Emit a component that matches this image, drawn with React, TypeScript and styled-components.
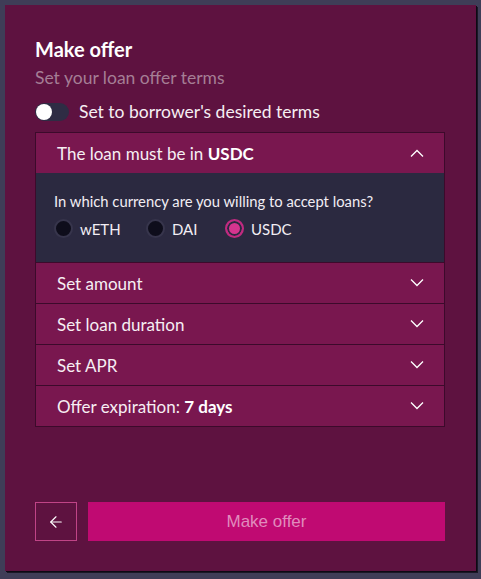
import styled, { createGlobalStyle } from 'styled-components'
import { ArrowLeft } from 'lucide-react'

const GlobalStyle = createGlobalStyle`
  body {
    margin: 0;
    background: #3f3d57;
    font-family: Lato, 'Noto Sans', sans-serif;
  }
`

const Panel = styled.div`
  box-sizing: border-box;
  margin: 5px;
  width: 471px;
  height: 566px;
  background: #5e1240;
  box-shadow: 1px 1px 0 #0c0a14, 2px 2px 0 #1a1726;
  padding: 32px 31px 30px 30px;
  display: flex;
  flex-direction: column;
  color: #f4eef2;
`

const Title = styled.h2`
  margin: 0;
  font-size: 20px;
  line-height: 24px;
  font-weight: 700;
  color: #ffffff;
`

const Subtitle = styled.p`
  margin: 7px 0 0;
  font-size: 17.5px;
  line-height: 20px;
  color: #a57e95;
`

const ToggleRow = styled.label`
  display: flex;
  align-items: center;
  gap: 10px;
  margin-top: 13px;
  font-size: 17.5px;
  line-height: 22px;
  color: #f6eef3;
`

const Switch = styled.span`
  position: relative;
  width: 34px;
  height: 18px;
  border-radius: 9px;
  background: #2e2c44;
  &::after {
    content: '';
    position: absolute;
    left: 1px;
    top: 1px;
    width: 16px;
    height: 16px;
    border-radius: 50%;
    background: #ffffff;
  }
`

const Accordion = styled.div`
  margin-top: 9px;
  border: 1px solid #3c0a2b;
  display: flex;
  flex-direction: column;
`

const Row = styled.div<{ $first?: boolean }>`
  display: flex;
  align-items: center;
  justify-content: space-between;
  height: 40px;
  padding: 0 20px 0 21px;
  background: #79174f;
  border-top: ${(p) => (p.$first ? 'none' : '1px solid #3c0a2b')};
  font-size: 17px;
  color: #f6eef3;
  b {
    font-weight: 700;
    color: #ffffff;
  }
`

const Body = styled.div`
  background: #2b2940;
  padding: 18px 18px 24px;
  display: flex;
  flex-direction: column;
  gap: 8px;
`

const Question = styled.div`
  font-size: 14.8px;
  line-height: 20px;
  color: #f2eef4;
`

const Options = styled.div`
  display: flex;
  align-items: center;
`

const Option = styled.label<{ $width: number }>`
  display: flex;
  align-items: center;
  gap: 7px;
  width: ${(p) => p.$width}px;
  font-size: 15px;
  color: #f2eef4;
`

const Radio = styled.span<{ $checked?: boolean }>`
  box-sizing: border-box;
  width: 19px;
  height: 19px;
  border-radius: 50%;
  background: ${(p) => (p.$checked ? '#d5358f' : '#0e0d1b')};
  border: 2px solid ${(p) => (p.$checked ? '#c02a80' : '#37354c')};
  box-shadow: ${(p) => (p.$checked ? 'inset 0 0 0 2px #2b2940' : 'none')};
`

const Footer = styled.div`
  margin-top: auto;
  display: flex;
  gap: 11px;
`

const BackButton = styled.button`
  box-sizing: border-box;
  width: 42px;
  height: 39px;
  background: transparent;
  border: 1px solid #c04487;
  color: #ffffff;
  display: flex;
  align-items: center;
  justify-content: center;
  padding: 0;
`

const SubmitButton = styled.button`
  flex: 1;
  height: 39px;
  border: none;
  background: #c00a72;
  color: #e08cbd;
  font-family: 'Liberation Sans', Arial, sans-serif;
  font-size: 17px;
`

const Chevron = ({ up }: { up?: boolean }) => (
  <svg width="14" height="8" viewBox="0 0 14 8" fill="none">
    <path
      d={up ? 'M1 7.5 L7 1.5 L13 7.5' : 'M1 0.5 L7 6.5 L13 0.5'}
      stroke="#ffffff"
      strokeWidth="1.3"
    />
  </svg>
)

const rows = [
  { label: 'Set amount' },
  { label: 'Set loan duration' },
  { label: 'Set APR' },
  { label: 'Offer expiration: ', value: '7 days' },
]

const currencies = [
  { name: 'wETH', width: 92 },
  { name: 'DAI', width: 79 },
  { name: 'USDC', width: 80, checked: true },
]

export default function App() {
  return (
    <>
      <GlobalStyle />
      <Panel>
        <Title>Make offer</Title>
        <Subtitle>Set your loan offer terms</Subtitle>
        <ToggleRow>
          <Switch />
          Set to borrower's desired terms
        </ToggleRow>
        <Accordion>
          <Row $first>
            <span>
              The loan must be in <b>USDC</b>
            </span>
            <Chevron up />
          </Row>
          <Body>
            <Question>In which currency are you willing to accept loans?</Question>
            <Options>
              {currencies.map((c) => (
                <Option key={c.name} $width={c.width}>
                  <Radio $checked={c.checked} />
                  {c.name}
                </Option>
              ))}
            </Options>
          </Body>
          {rows.map((r) => (
            <Row key={r.label}>
              <span>
                {r.label}
                {r.value && <b>{r.value}</b>}
              </span>
              <Chevron />
            </Row>
          ))}
        </Accordion>
        <Footer>
          <BackButton>
            <ArrowLeft size={18} strokeWidth={1.5} />
          </BackButton>
          <SubmitButton>Make offer</SubmitButton>
        </Footer>
      </Panel>
    </>
  )
}
